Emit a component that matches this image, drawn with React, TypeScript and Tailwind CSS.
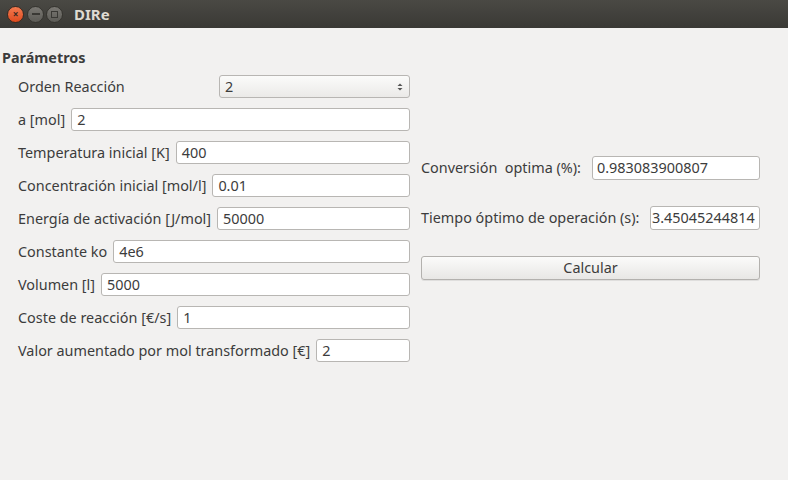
import React from 'react';

const font = { fontFamily: '"Noto Sans", "Open Sans", sans-serif' };

interface FieldProps {
  label: string;
  value: string;
}

function Field({ label, value }: FieldProps) {
  return (
    <div className="flex items-center h-[23px] mb-[10px]">
      <span className="whitespace-nowrap text-[14.4px] text-[#3c3c3c] mr-[6px]">{label}</span>
      <div className="flex-1 h-[23px] bg-white border border-[#b8b6b3] rounded-[3px] px-[5px] flex items-center text-[14.4px] text-[#3c3c3c]">
        {value}
      </div>
    </div>
  );
}

const params: FieldProps[] = [
  { label: 'a [mol]', value: '2' },
  { label: 'Temperatura inicial [K]', value: '400' },
  { label: 'Concentración inicial [mol/l]', value: '0.01' },
  { label: 'Energía de activación [J/mol]', value: '50000' },
  { label: 'Constante ko', value: '4e6' },
  { label: 'Volumen [l]', value: '5000' },
  { label: 'Coste de reacción [€/s]', value: '1' },
  { label: 'Valor aumentado por mol transformado [€]', value: '2' },
];

export default function App() {
  return (
    <div className="w-[788px] h-[480px] bg-[#f2f1f0] flex flex-col overflow-hidden" style={font}>
      {/* Title bar */}
      <div className="h-[28px] flex items-center bg-gradient-to-b from-[#4a4944] to-[#3a3935] pl-[7px]">
        <div className="w-[17px] h-[17px] rounded-full bg-gradient-to-b from-[#f27a4f] to-[#df4a1c] border border-[#3a2a22] flex items-center justify-center text-[10px] leading-none text-[#3a2a22] font-bold">
          ×
        </div>
        <div className="w-[17px] h-[17px] ml-[3px] rounded-full bg-gradient-to-b from-[#7a7873] to-[#5c5b56] border border-[#35342f] flex items-center justify-center">
          <div className="w-[8px] h-[2px] bg-[#3a3935]" />
        </div>
        <div className="w-[17px] h-[17px] ml-[2px] rounded-full bg-gradient-to-b from-[#7a7873] to-[#5c5b56] border border-[#35342f] flex items-center justify-center">
          <div className="w-[7px] h-[7px] border-[1.5px] border-[#3a3935]" />
        </div>
        <span className="ml-[11px] text-[15px] font-bold text-[#dfdbd2]">DIRe</span>
      </div>

      {/* Body */}
      <div className="flex">
        {/* Parámetros */}
        <div className="w-[410px] flex flex-col">
          <div className="pl-[2px] pt-[19px] h-[47px] text-[14.4px] font-bold text-[#3c3c3c]">Parámetros</div>
          <div className="pl-[18px]">
            <div className="flex items-center h-[23px] mb-[10px]">
              <span className="w-[201px] text-[14.4px] text-[#3c3c3c]">Orden Reacción</span>
              <div className="flex-1 h-[23px] border border-[#b8b6b3] rounded-[3px] bg-gradient-to-b from-[#fbfbfa] to-[#ebeae8] px-[5px] flex items-center justify-between text-[14.4px] text-[#3c3c3c]">
                <span>2</span>
                <svg width="6" height="10" viewBox="0 0 6 10" className="mr-[1px]">
                  <path d="M0.5 4 L3 1.5 L5.5 4 Z" fill="#555" />
                  <path d="M0.5 6 L3 8.5 L5.5 6 Z" fill="#555" />
                </svg>
              </div>
            </div>
            {params.map((p) => (
              <Field key={p.label} label={p.label} value={p.value} />
            ))}
          </div>
        </div>

        {/* Resultados */}
        <div className="w-[339px] ml-[11px] pt-[128px] flex flex-col">
          <div className="flex items-center h-[24px] mb-[26px]">
            <span className="w-[171px] shrink-0 whitespace-pre text-[14.4px] text-[#3c3c3c]">Conversión  optima (%):</span>
            <div className="flex-1 h-[24px] bg-white border border-[#b8b6b3] rounded-[3px] px-[4px] flex items-center text-[14.4px] text-[#3c3c3c]">
              0.983083900807
            </div>
          </div>
          <div className="flex items-center h-[24px] mb-[26px]">
            <span className="w-[229px] shrink-0 whitespace-nowrap text-[14.4px] text-[#3c3c3c]">Tiempo óptimo de operación (s):</span>
            <div className="flex-1 h-[24px] bg-white border border-[#b8b6b3] rounded-[3px] px-[1px] flex items-center text-[14.4px] text-[#3c3c3c] overflow-hidden whitespace-nowrap">
              3.45045244814
            </div>
          </div>
          <button className="h-[24px] w-full border border-[#b3b1ae] rounded-[3px] bg-gradient-to-b from-[#fbfbfa] to-[#e8e7e5] text-[14.4px] text-[#3c3c3c] shadow-[0_1px_0_rgba(0,0,0,0.08)]">
            Calcular
          </button>
        </div>
      </div>
    </div>
  );
}
